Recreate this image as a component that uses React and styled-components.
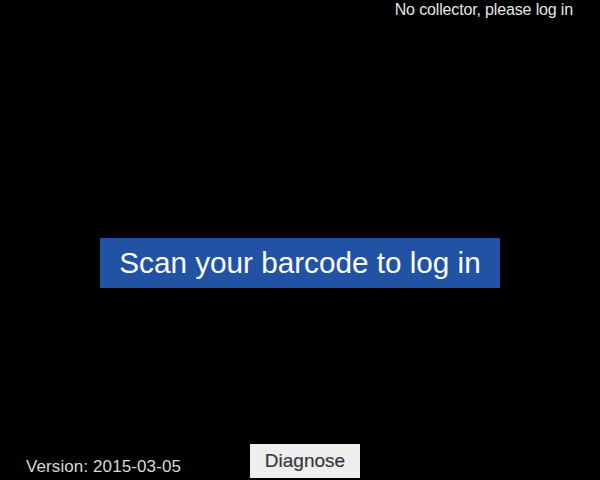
import styled, { createGlobalStyle } from "styled-components";

const GlobalStyle = createGlobalStyle`
	html, body {
		margin: 0;
		padding: 0;
		background: #000000;
	}
	body {
		font-family: 'Liberation Sans', Arial, sans-serif;
	}
`;

export default function App() {
	return (
		<>
			<GlobalStyle />
			<Screen>
				<Header>
					<Status>No collector, please log in</Status>
				</Header>
				<Middle>
					<Prompt>Scan your barcode to log in</Prompt>
				</Middle>
				<Footer>
					<Version>Version: 2015-03-05</Version>
					<DiagnoseButton>Diagnose</DiagnoseButton>
				</Footer>
			</Screen>
		</>
	);
}

const Screen = styled.div`
	width: 600px;
	height: 480px;
	background: #000000;
	display: flex;
	flex-direction: column;
	overflow: hidden;
`;

const Header = styled.div`
	display: flex;
	justify-content: flex-end;
	padding: 1px 27px 0 0;
	height: 23px;
`;

const Status = styled.div`
	font-size: 16px;
	line-height: 18px;
	letter-spacing: -0.15px;
	color: #e6e6e6;
`;

const Middle = styled.div`
	flex: 1;
	display: flex;
	justify-content: center;
	padding-top: 214px;
`;

const Prompt = styled.div`
	width: 400px;
	height: 50px;
	background: #2252a4;
	color: #ffffff;
	font-size: 29.7px;
	display: flex;
	align-items: center;
	justify-content: center;
`;

const Footer = styled.div`
	display: grid;
	grid-template-columns: 250px 110px 1fr;
	align-items: end;
	padding-bottom: 2px;
`;

const Version = styled.div`
	padding: 0 0 1px 26px;
	font-size: 17px;
	line-height: 20px;
	letter-spacing: 0.1px;
	color: #d8d8d8;
`;

const DiagnoseButton = styled.button`
	width: 110px;
	height: 34px;
	border: none;
	margin: 0;
	padding: 0;
	background: #eeeeee;
	color: #383840;
	font-family: 'Liberation Sans', Arial, sans-serif;
	font-size: 19px;
	-webkit-text-stroke: 0.2px #383840;
`;
